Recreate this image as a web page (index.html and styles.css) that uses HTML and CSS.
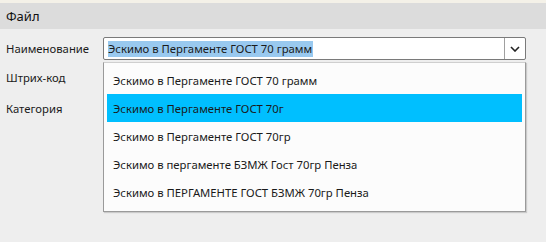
FILE: index.html
```html
<!DOCTYPE html>
<html lang="ru">
<head>
<meta charset="utf-8">
<link rel="stylesheet" href="styles.css">
</head>
<body>
<div class="topstrip"></div>
<div class="header">Файл</div>
<div class="form">
  <div class="label">Наименование</div>
  <div class="combo">
    <div class="combo-text"><span class="sel">Эскимо в Пергаменте ГОСТ 70 грамм</span></div>
    <div class="combo-btn">
      <svg width="10" height="6" viewBox="0 0 10 6"><path d="M1 1 L5 5 L9 1" fill="none" stroke="#222" stroke-width="1.6"/></svg>
    </div>
  </div>
  <div class="label">Штрих-код</div>
  <div class="field"></div>
  <div class="label">Категория</div>
  <div class="field"></div>
  <div class="popup">
    <div class="item">Эскимо в Пергаменте ГОСТ 70 грамм</div>
    <div class="item active">Эскимо в Пергаменте ГОСТ 70г</div>
    <div class="item">Эскимо в Пергаменте ГОСТ 70гр</div>
    <div class="item">Эскимо в пергаменте БЗМЖ Гост 70гр Пенза</div>
    <div class="item">Эскимо в ПЕРГАМЕНТЕ ГОСТ БЗМЖ 70гр Пенза</div>
  </div>
</div>
</body>
</html>
```

FILE: styles.css
```css
html, body {
  margin: 0;
  padding: 0;
  background: #eeeeee;
  font-family: "Noto Sans", "Open Sans", sans-serif;
  font-size: 11.3px;
  color: #1a1a1a;
  width: 546px;
  height: 242px;
  overflow: hidden;
}
.topstrip {
  height: 3px;
  background: #f4f1e8;
}
.header {
  height: 26px;
  background: #dcdcdc;
  display: flex;
  align-items: center;
  padding-left: 6px;
  font-size: 13px;
  color: #111;
}
.form {
  position: relative;
  display: grid;
  grid-template-columns: 97px 423px;
  grid-template-rows: 23px 34px 28px;
  padding: 8px 0 0 6px;
  align-items: center;
}
.label {
  color: #1a1a1a;
}
.combo {
  height: 23px;
  box-sizing: border-box;
  border: 1px solid #7a7a7a;
  border-radius: 2px;
  background: #fff;
  display: flex;
}
.combo-text {
  flex: 1;
  display: flex;
  align-items: center;
  padding-left: 4px;
}
.sel {
  background: #99c9ef;
  line-height: 16px;
  padding-right: 1px;
}
.combo-btn {
  width: 20px;
  border-left: 1px solid #a0a0a0;
  display: flex;
  align-items: center;
  justify-content: center;
}
.field {
  height: 23px;
}
.popup {
  position: absolute;
  left: 103px;
  top: 33px;
  width: 423px;
  height: 150px;
  box-sizing: border-box;
  border: 1px solid #9a9a9a;
  border-top-color: #cfcfcf;
  background: #fcfcfc;
  padding: 3px 3px;
  box-shadow: 1px 1px 1px rgba(0,0,0,0.15);
}
.item {
  height: 28px;
  display: flex;
  align-items: center;
  padding-left: 6px;
  color: #1a1a1a;
}
.item.active {
  background: #00bfff;
}
```
